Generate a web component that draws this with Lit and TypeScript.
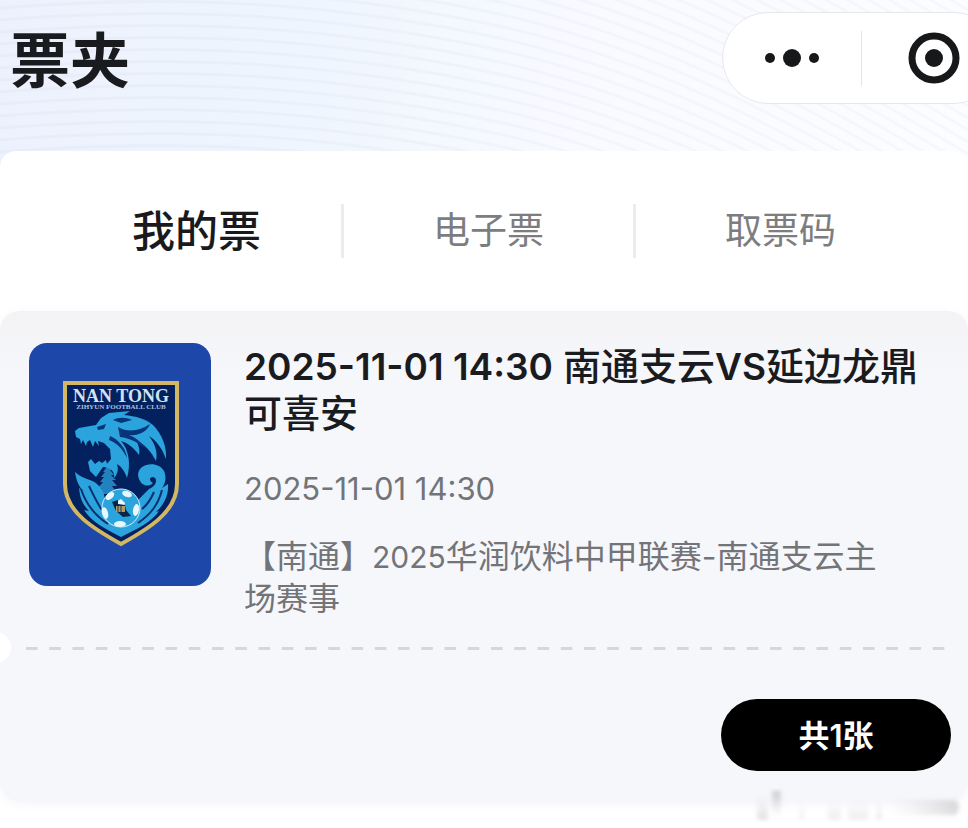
import { LitElement, html, css, svg } from "lit";
import { customElement, state } from "lit/decorators.js";
import { classMap } from "lit/directives/class-map.js";

const WAVES = Array.from({ length: 56 }, (_, i) => i * 12 - 420);

@customElement("club-crest")
class ClubCrest extends LitElement {
  static styles = css`
    :host { display: block; }
    svg { display: block; width: 100%; height: auto; }
    .name { font: bold 18px "Liberation Serif", serif; fill: #d3e1f2; }
    .sub { font: bold 7px "Liberation Serif", serif; fill: #a9c2e0; }
  `;
  render() {
    return html`<svg viewBox="29 343 182 243" role="img" aria-label="南通支云">
      <rect x="29" y="343" width="182" height="243" fill="#1d47a8" />
      <path d="M65 383H177V484C177 512 148 529 121 544C94 529 65 512 65 484Z" fill="#04215f" stroke="#d3b763" stroke-width="4" />
      <text class="name" x="121" y="402" text-anchor="middle">NAN TONG</text>
      <text class="sub" x="121" y="409" text-anchor="middle">ZIHYUN FOOTBALL CLUB</text>
      <g fill="#2ba3dc">
        <path d="M75 431L79 428L96 425L101 418L109 413L130 411L124 415C136 416 146 419 153 425C162 434 167 447 166 459C162 448 156 440 149 436C155 444 158 452 156 461C151 451 144 444 136 440C139 446 140 450 139 455C134 448 128 443 121 441C129 450 131 464 127 478C125 472 122 467 117 464C119 470 117 475 114 478C115 471 110 467 103 467L96 477L90 471L88 462L91 459L95 464L99 461L102 463L106 460L107 464L111 459L110 449L104 443L98 441L99 446L95 441L93 447L90 440L87 442L86 446L83 440L81 444L80 439L76 437Z" />
        <path d="M75 472C83 480 93 479 98 485C104 490 106 498 104 508C106 524 116 530 128 525C139 521 141 508 138 500L149 489C157 486 158 478 153 477C149 477 149 481 153 483C147 489 139 484 138 475C138 463 158 460 164 471C167 478 165 484 162 488L168 484C169 496 163 506 156 512L159 511C152 522 137 529 121 537C105 529 92 522 84 510L89 511C80 502 80 494 79 488L83 491C78 485 76 479 75 472Z" />
        <path d="M107 462L109 467L112 470H110L114 475H111L116 480H112L117 486H112L118 494H97L102 488H98L103 482H100L104 477H101L105 472H103L106 468Z" opacity=".75" />
      </g>
      <g fill="#06357a">
        <path d="M97 427L106 424L104 429L98 430Z" />
        <path d="M118 427C128 433 140 431 150 424C147 432 138 436 129 435C137 438 143 444 147 450C139 443 130 438 120 437Z" />
        <path d="M110 436C118 439 126 448 127 458C122 448 117 443 109 440ZM113 420C118 417 126 417 132 420L121 423Z" />
      </g>
      <g fill="none" stroke="#07306f" stroke-width="2">
        <path d="M81 489C86 504 94 515 108 524M89 486C93 494 97 503 102 510M162 490C158 505 151 514 138 523M154 492C151 499 147 505 142 509" />
      </g>
      <circle cx="121" cy="508" r="19" fill="#2ba3dc" stroke="#d5eff9" />
      <g fill="#e6f8fd">
        <ellipse cx="110" cy="496" rx="5" ry="3" transform="rotate(-40 110 496)" />
        <ellipse cx="127" cy="494" rx="5" ry="3" transform="rotate(20 127 494)" />
        <ellipse cx="105" cy="513" rx="3" ry="6" transform="rotate(-15 105 513)" />
        <ellipse cx="136" cy="510" rx="3" ry="6" transform="rotate(10 136 510)" />
        <ellipse cx="120" cy="524" rx="6" ry="3" />
        <path d="M114 503L121 499L125 503L124 508L116 509Z" />
      </g>
      <path d="M112 502L118 500L118 504L125 505L126 510L131 516L123 517L116 511Z" fill="#0a2647" />
      <path d="M116 506H125V512H116Z" fill="#a99c6a" />
      <path d="M118 506V512M121 506V512" stroke="#29333c" />
    </svg>`;
  }
}

@customElement("app-root")
class AppRoot extends LitElement {
  @state() private active = 0;

  static styles = css`
    :host {
      display: block;
      min-height: 100vh;
      overflow: hidden;
      background: #fff;
      color: #1a1b1f;
      font-family: Inter, "Noto Sans CJK SC", sans-serif;
    }
    * { box-sizing: border-box; }
    button { border: 0; padding: 0; background: none; font: inherit; color: inherit; cursor: pointer; }
    h1, h2, p { margin: 0; }
    .header {
      position: relative;
      display: flex;
      align-items: flex-start;
      justify-content: space-between;
      height: 167px;
      padding: 12px 0 0 10px;
      background: linear-gradient(100deg, #edf1fd 0%, #eef5fe 30%, #f9faff 60%, #fcfdff 100%);
    }
    .waves { position: absolute; inset: 0; width: 100%; height: 100%; }
    .heading { position: relative; font-size: 60px; line-height: 98px; font-weight: 600; }
    .capsule {
      position: relative;
      display: flex;
      align-items: center;
      width: 278px;
      height: 92px;
      margin-right: -32px;
      border: 1px solid #e6e8ea;
      border-radius: 46px;
      background: #fff;
    }
    .capsule svg { display: block; }
    .more, .close { height: 90px; }
    .more { width: 138px; padding-left: 40px; }
    .close { flex: 1; padding-left: 46px; }
    .rule { width: 1px; height: 55px; background: #e4e5e7; }
    .tabs {
      position: relative;
      display: grid;
      grid-template-columns: repeat(3, 1fr);
      align-items: center;
      height: 160px;
      margin-top: -16px;
      padding: 0 40px 0 52px;
      border-radius: 16px 16px 0 0;
      background: #fff;
    }
    .tab { height: 54px; border-right: 3px solid #ececee; font-size: 37px; line-height: 54px; color: #7d7d7f; }
    .tab:last-child { border-right-color: transparent; }
    .tab.on { font-size: 43px; font-weight: 500; color: #1a1a1c; }
    .ticket {
      position: relative;
      border-radius: 20px;
      background: linear-gradient(#f3f3f5 0, #f6f7fb 60px, #f6f7fb 100%);
      box-shadow: 0 2px 12px #f6f6fa;
    }
    .info { display: flex; gap: 33px; padding: 32px 40px 27px 29px; }
    .crest { flex: none; width: 182px; height: 243px; border-radius: 18px; overflow: hidden; }
    .text { flex: 1; min-width: 0; }
    .title { font-size: 38px; line-height: 46px; font-weight: 500; }
    .title .latin { font-size: 37px; font-weight: 600; }
    .date { margin-top: 32px; font-size: 31px; line-height: 42px; color: #737478; }
    .desc { margin-top: 26px; padding-right: 40px; font-size: 32px; line-height: 42px; color: #737478; }
    .year { font-size: 30px; }
    .tear {
      height: 3px;
      margin: 0 12px 0 26px;
      background: linear-gradient(90deg, #d5d7da 12px, transparent 12px) 0 0 / 23px 3px round;
    }
    .notch {
      position: absolute;
      left: -20px;
      top: 321px;
      width: 31px;
      height: 31px;
      border-radius: 50%;
      background: #fff;
    }
    .actions { display: flex; justify-content: flex-end; padding: 49px 17px 31px; }
    .count {
      width: 230px;
      height: 72px;
      padding-bottom: 3px;
      border-radius: 36px;
      background: #000;
      color: #fff;
      font-size: 31px;
      font-weight: 600;
    }
    .mark { position: absolute; right: 0; bottom: -28px; display: block; opacity: .5; }
  `;

  render() {
    return html`
      <header class="header">
        <svg class="waves" viewBox="0 0 968 167" preserveAspectRatio="none" aria-hidden="true">
          ${WAVES.map(
            (y) => svg`<path d="M0 ${y + 8}C150 ${y - 4} 300 ${y - 2} 480 ${y + 34}S800 ${y + 150} 968 ${y + 250}" fill="none" stroke="#5c7080" stroke-opacity=".035" stroke-width="3" />`,
          )}
        </svg>
        <h1 class="heading">票夹</h1>
        <div class="capsule">
          <button class="more" aria-label="更多">
            <svg width="58" height="20" viewBox="0 0 58 20" fill="#17181a">
              <circle cx="7" cy="10" r="5" /><circle cx="29" cy="10" r="9" /><circle cx="51" cy="10" r="5" />
            </svg>
          </button>
          <span class="rule"></span>
          <button class="close" aria-label="关闭">
            <svg width="52" height="52" viewBox="0 0 52 52">
              <circle cx="26" cy="26" r="22" fill="none" stroke="#17181a" stroke-width="7" />
              <circle cx="26" cy="26" r="9" fill="#17181a" />
            </svg>
          </button>
        </div>
      </header>
      <nav class="tabs">
        ${["我的票", "电子票", "取票码"].map(
          (label, i) => html`<button class=${classMap({ tab: true, on: i === this.active })} @click=${() => (this.active = i)}>${label}</button>`,
        )}
      </nav>
      <article class="ticket">
        <div class="info">
          <club-crest class="crest"></club-crest>
          <div class="text">
            <h2 class="title"><time class="latin">2025-11-01 14:30</time> 南通支云<span class="latin">VS</span>延边龙鼎可喜安</h2>
            <p class="date"><time>2025-11-01 14:30</time></p>
            <p class="desc">【南通】<span class="year">2025</span>华润饮料中甲联赛-南通支云主场赛事</p>
          </div>
        </div>
        <div class="tear"></div>
        <span class="notch"></span>
        <div class="actions"><button class="count">共1张</button></div>
        <svg class="mark" width="220" height="44" viewBox="748 784 220 44" aria-hidden="true">
          <defs>
            <linearGradient id="up" x2="0" y2="1"><stop offset="0" stop-color="#a0a2a5" /><stop offset="1" stop-color="#c0c1c4" stop-opacity="0" /></linearGradient>
            <linearGradient id="down" x2="0" y2="1"><stop offset="0" stop-color="#c4c5c8" stop-opacity="0" /><stop offset="1" stop-color="#c4c5c8" /></linearGradient>
            <linearGradient id="side"><stop offset="0" stop-color="#cfcfd1" stop-opacity="0" /><stop offset="1" stop-color="#b4b5b7" /></linearGradient>
            <filter id="soft"><feGaussianBlur stdDeviation="2" /></filter>
          </defs>
          <g filter="url(#soft)">
            <path d="M757 794H768V818H757Z" fill="url(#down)" />
            <path d="M772 789H781V816H772Z" fill="url(#up)" />
            <path d="M800 800H804V818H800ZM828 798H841V818H828ZM848 798H868V818H848ZM876 798H882V818H876Z" fill="url(#down)" opacity=".6" />
            <path d="M888 798H956Q962 805 956 813H888Z" fill="url(#side)" />
          </g>
        </svg>
      </article>
    `;
  }
}
